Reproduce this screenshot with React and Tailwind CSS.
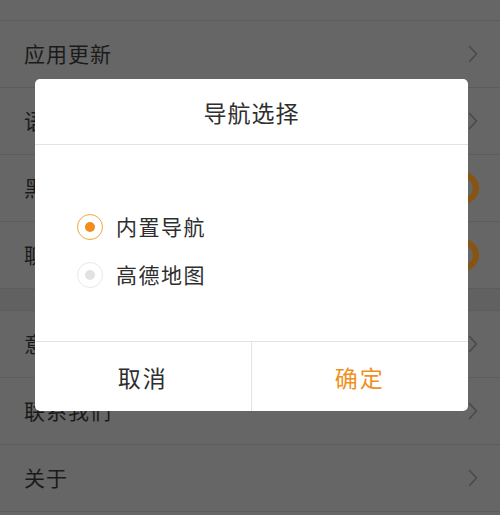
import React from "react";

const Chevron = () => (
  <svg width="10" height="18" viewBox="0 0 10 18" fill="none">
    <polyline
      points="1.5,1.5 8.5,9 1.5,16.5"
      stroke="#4a4a4a"
      strokeWidth="1.6"
      strokeLinecap="round"
      strokeLinejoin="round"
    />
  </svg>
);

const Row = ({ label, toggle }) => (
  <div className="h-[67px] border-b border-[#5c5c5c] flex items-center justify-between pl-[24px] pr-[22px]">
    <span className="text-[21px] tracking-[1px] text-[#1a1a1a]">{label}</span>
    {toggle ? (
      <div className="w-[32px] h-[32px] rounded-full border-[6px] border-[#875411] -mr-[1px]" />
    ) : (
      <Chevron />
    )}
  </div>
);

const Radio = ({ checked }) => (
  <div
    className={
      checked
        ? "w-[26px] h-[26px] rounded-full border-[1.5px] border-[#f2a73b] flex items-center justify-center"
        : "w-[26px] h-[26px] rounded-full border-[1.5px] border-[#e8e8e8] flex items-center justify-center"
    }
  >
    <div
      className={
        checked
          ? "w-[10px] h-[10px] rounded-full bg-[#f28c1a]"
          : "w-[10px] h-[10px] rounded-full bg-[#e2e2e2]"
      }
    />
  </div>
);

const options = [
  { label: "内置导航", checked: true },
  { label: "高德地图", checked: false },
];

export default function App() {
  return (
    <div className="relative w-[500px] h-[515px] overflow-hidden bg-[#666666] font-['Noto_Sans_CJK_SC',sans-serif]">
      <div className="flex flex-col">
        <div className="h-[21px] border-b border-[#5c5c5c]" />
        <Row label="应用更新" />
        <Row label="语音播报" />
        <Row label="黑夜模式" toggle />
        <Row label="聊天提醒" toggle />
        <div className="h-[22px] bg-[#616161] border-b border-[#5c5c5c]" />
        <Row label="意见反馈" />
        <Row label="联系我们" />
        <Row label="关于" />
      </div>

      <div className="absolute left-[35px] top-[79px] w-[433px] h-[332px] bg-white rounded-[5px] flex flex-col">
        <div className="h-[66px] border-b border-[#e3e3e3] flex items-center justify-center pt-[2px]">
          <span className="text-[23px] tracking-[1px] text-[#2e2e2e]">导航选择</span>
        </div>
        <div className="flex-1 pl-[42px] pt-[58px] flex flex-col">
          {options.map((opt) => (
            <div key={opt.label} className="h-[48px] flex items-center gap-[13px]">
              <Radio checked={opt.checked} />
              <span className="text-[21px] tracking-[1.5px] text-[#2e2e2e]">{opt.label}</span>
            </div>
          ))}
        </div>
        <div className="h-[70px] border-t border-[#e3e3e3] grid grid-cols-2">
          <button className="flex items-center justify-center pt-[1px] border-r border-[#e3e3e3] text-[23px] tracking-[2px] text-[#2e2e2e]">
            取消
          </button>
          <button className="flex items-center justify-center pt-[1px] text-[23px] tracking-[2px] text-[#f0901d]">
            确定
          </button>
        </div>
      </div>
    </div>
  );
}
